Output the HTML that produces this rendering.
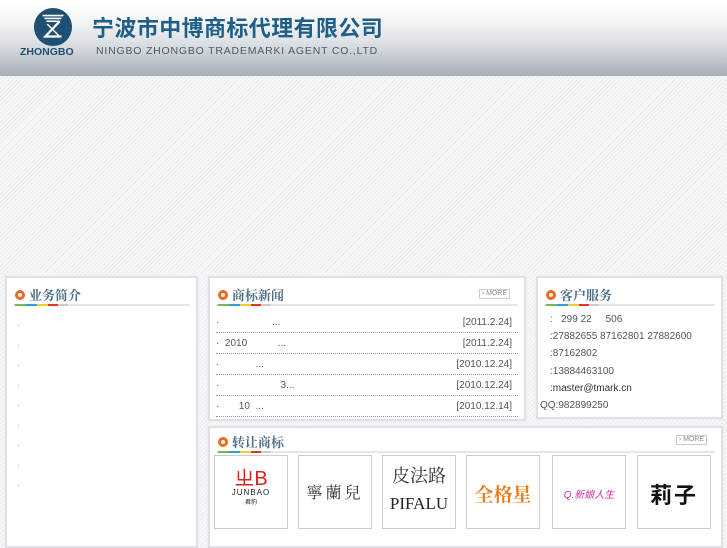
<!DOCTYPE html>
<html><head><meta charset="utf-8"><style>
*{margin:0;padding:0;box-sizing:border-box}
body{width:727px;height:545px;overflow:hidden;position:relative;font-family:"Liberation Sans","Noto Sans CJK SC",sans-serif;font-size:10px;color:#555;
background:#f2f3f4 repeating-linear-gradient(135deg,#f6f7f8 0 2px,#e9ebed 2px 3px)}
.hdr{position:absolute;left:0;top:0;width:727px;height:76px;background:linear-gradient(#ffffff 0,#f6f7f8 25%,#d9dde2 60%,#a6adb7 100%)}
.box{position:absolute;background:#fff;border:2px solid #dde1e6;box-shadow:0 0 0 1px #eef0f2}
.tt{position:absolute;left:6px;right:6px;top:4px;height:24px;border-bottom:2px solid #e3e6ea}
.tt .ic{position:absolute;left:2px;top:8px;width:10px;height:10px;border-radius:50%;border:3px solid #ee6a1e}
.tt .t{position:absolute;left:16px;top:3px;font-family:"Noto Serif CJK SC",serif;font-weight:bold;font-size:13px;color:#4d6f86;letter-spacing:0}
.bar{position:absolute;left:2px;bottom:-2px;height:2px;width:53px;background:linear-gradient(90deg,#7ab648 0 11px,#2e9fd9 11px 22px,#f2d02b 22px 33px,#e0362b 33px 43px,#ccc 43px)}
.more{position:absolute;right:8px;top:7px;width:31px;height:10px;border:1px solid #ccc;font-size:7px;color:#888;line-height:8px;text-align:center}
.row{position:absolute;left:6px;right:6px;height:21px;border-bottom:1px dotted #999;font-size:10px;line-height:22px}
.row .d{position:absolute;right:6px}
.dot{position:absolute;left:10px;color:#999;font-size:9px}
.cs{position:absolute;left:12px;font-size:10px;color:#555}
.lg{position:absolute;top:27px;width:74px;height:74px;border:1px solid #ccc;text-align:center}
</style></head><body>
<div class="hdr">
 <svg style="position:absolute;left:33px;top:7px" width="40" height="40" viewBox="0 0 42 42">
  <circle cx="21" cy="21" r="20" fill="#1f4f72"/>
  <path d="M10 9h22M12 12h18M14 15h14" stroke="#fff" stroke-width="1.6"/>
  <path d="M28 15L13 31h17" stroke="#fff" stroke-width="2.4" fill="none"/>
  <path d="M15 18l12 12" stroke="#fff" stroke-width="1.5"/>
 </svg>
 <div style="position:absolute;left:20px;top:47px;font-weight:bold;font-size:10px;color:#1f4f72;transform:scaleX(1.05);transform-origin:left">ZHONGBO</div>
 <div style="position:absolute;left:92px;top:15px;font-size:22px;font-weight:bold;color:#1f5e86;letter-spacing:0.4px;line-height:28px">宁波市中博商标代理有限公司</div>
 <div style="position:absolute;left:96px;top:45px;font-size:10.5px;color:#4a5a6a;letter-spacing:0.8px">NINGBO ZHONGBO TRADEMARKI AGENT CO.,LTD</div>
</div>

<div class="box" style="left:5px;top:276px;width:193px;height:272px">
 <div class="tt"><span class="ic"></span><span class="t">业务简介</span><span class="bar"></span></div>
 <div class="dot" style="top:42px">·</div><div class="dot" style="top:62px">·</div><div class="dot" style="top:82px">·</div>
 <div class="dot" style="top:102px">·</div><div class="dot" style="top:122px">·</div><div class="dot" style="top:142px">·</div>
 <div class="dot" style="top:162px">·</div><div class="dot" style="top:182px">·</div><div class="dot" style="top:202px">·</div>
</div>

<div class="box" style="left:208px;top:276px;width:318px;height:145px">
 <div class="tt"><span class="ic"></span><span class="t">商标新闻</span><span class="bar"></span><span class="more">› MORE</span></div>
 <div class="row" style="top:34px">·&nbsp;&nbsp;&nbsp;&nbsp;&nbsp;&nbsp;&nbsp;&nbsp;&nbsp;&nbsp;&nbsp;&nbsp;&nbsp;&nbsp;&nbsp;&nbsp;&nbsp;&nbsp;&nbsp;...<span class="d">[2011.2.24]</span></div>
 <div class="row" style="top:55px">·&nbsp;&nbsp;2010&nbsp;&nbsp;&nbsp;&nbsp;&nbsp;&nbsp;&nbsp;&nbsp;&nbsp;&nbsp;&nbsp;...<span class="d">[2011.2.24]</span></div>
 <div class="row" style="top:76px">·&nbsp;&nbsp;&nbsp;&nbsp;&nbsp;&nbsp;&nbsp;&nbsp;&nbsp;&nbsp;&nbsp;&nbsp;&nbsp;...<span class="d">[2010.12.24]</span></div>
 <div class="row" style="top:97px">·&nbsp;&nbsp;&nbsp;&nbsp;&nbsp;&nbsp;&nbsp;&nbsp;&nbsp;&nbsp;&nbsp;&nbsp;&nbsp;&nbsp;&nbsp;&nbsp;&nbsp;&nbsp;&nbsp;&nbsp;&nbsp;&nbsp;3...<span class="d">[2010.12.24]</span></div>
 <div class="row" style="top:118px">·&nbsp;&nbsp;&nbsp;&nbsp;&nbsp;&nbsp;&nbsp;10&nbsp;&nbsp;...<span class="d">[2010.12.14]</span></div>
</div>

<div class="box" style="left:536px;top:276px;width:187px;height:143px">
 <div class="tt"><span class="ic"></span><span class="t">客户服务</span><span class="bar"></span></div>
 <div class="cs" style="top:36px">:&nbsp;&nbsp;&nbsp;299 22&nbsp;&nbsp;&nbsp;&nbsp;&nbsp;506</div>
 <div class="cs" style="top:53px">:27882655 87162801 27882600</div>
 <div class="cs" style="top:70px">:87162802</div>
 <div class="cs" style="top:88px">:13884463100</div>
 <div class="cs" style="top:105px;color:#333">:master@tmark.cn</div>
 <div class="cs" style="top:122px;left:2px">QQ:982899250</div>
</div>

<div class="box" style="left:208px;top:426px;width:515px;height:122px">
 <div class="tt" style="top:1px"><span class="ic"></span><span class="t">转让商标</span><span class="bar"></span><span class="more" style="top:6px">› MORE</span></div>
 <div class="lg" style="left:4px"><div style="color:#d92020;font-size:20px;margin-top:14px;line-height:18px">ㄓB</div><div style="font-size:8px;color:#222;letter-spacing:1px">JUNBAO</div><div style="font-size:6px;color:#222">君豹</div></div>
 <div class="lg" style="left:88px"><div style="font-family:'Noto Serif CJK SC',serif;font-size:16px;margin-top:24px;color:#333;letter-spacing:3px">寧蘭兒</div></div>
 <div class="lg" style="left:172px"><div style="font-family:'Noto Serif CJK SC',serif;font-size:18px;margin-top:6px;color:#333">皮法路</div><div style="font-family:'Liberation Serif',serif;font-size:17px;margin-top:6px;color:#222">PIFALU</div></div>
 <div class="lg" style="left:256px"><div style="font-family:'Noto Serif CJK SC',serif;font-weight:bold;font-size:19px;margin-top:24px;color:#ee7b1a">全格星</div></div>
 <div class="lg" style="left:342px"><div style="font-size:10px;margin-top:30px;color:#d0309a;font-style:italic">Q.新娘人生</div></div>
 <div class="lg" style="left:427px"><div style="font-weight:bold;font-size:22px;margin-top:22px;color:#111;letter-spacing:2px">莉子</div></div>
</div>
</body></html>
